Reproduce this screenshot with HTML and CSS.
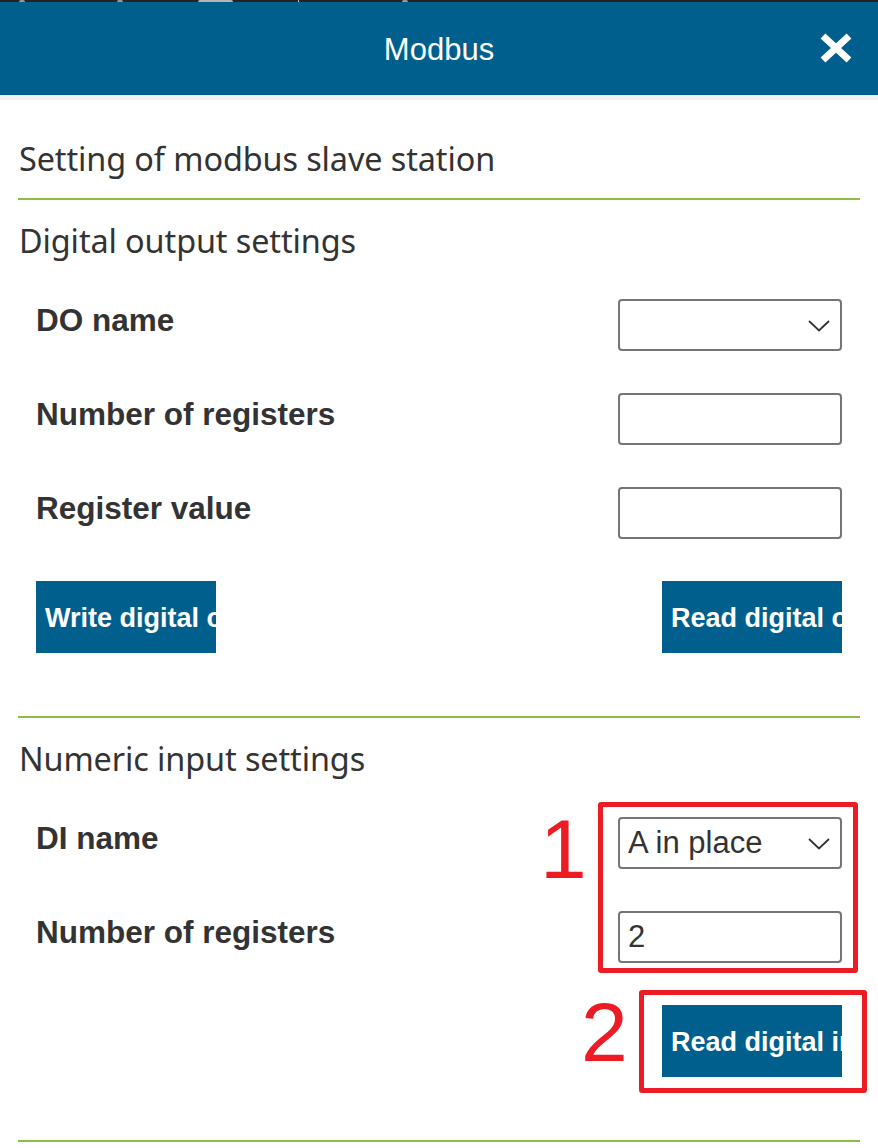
FILE: index.html
```html
<!DOCTYPE html>
<html lang="en">
<head>
<meta charset="utf-8">
<title>Modbus</title>
<link rel="stylesheet" href="styles.css">
</head>
<body>
<div class="topstrip">
  <span class="bump b1"></span>
  <span class="bump b2"></span>
  <span class="bump b3"></span>
  <span class="bump b4"></span>
  <span class="bump b5"></span>
</div>
<header class="header">
  <h1 class="header-title">Modbus</h1>
  <button class="close" aria-label="Close">
    <svg width="34" height="30" viewBox="0 0 34 30"><path d="M4 3 L30 27 M30 3 L4 27" stroke="#fff" stroke-width="7" fill="none"/></svg>
  </button>
</header>
<div class="band"></div>
<main class="content">
  <h2 class="heading first">Setting of modbus slave station</h2>
  <div class="rule"></div>

  <section class="section">
    <h2 class="heading">Digital output settings</h2>
    <div class="rows">
      <div class="row">
        <label class="label">DO name</label>
        <div class="field select"><span class="value"></span>
          <svg class="chev" width="22" height="12" viewBox="0 0 22 12"><path d="M1 1 L11 10.5 L21 1" stroke="#333" stroke-width="1.8" fill="none"/></svg>
        </div>
      </div>
      <div class="row">
        <label class="label">Number of registers</label>
        <div class="field"></div>
      </div>
      <div class="row">
        <label class="label">Register value</label>
        <div class="field"></div>
      </div>
    </div>
    <div class="buttons">
      <button class="btn">Write digital output</button>
      <button class="btn">Read digital output</button>
    </div>
  </section>
  <div class="rule"></div>

  <section class="section">
    <h2 class="heading">Numeric input settings</h2>
    <div class="rows annotated">
      <div class="row">
        <label class="label">DI name</label>
        <div class="field select"><span class="value">A in place</span>
          <svg class="chev" width="22" height="12" viewBox="0 0 22 12"><path d="M1 1 L11 10.5 L21 1" stroke="#333" stroke-width="1.8" fill="none"/></svg>
        </div>
      </div>
      <div class="row">
        <label class="label">Number of registers</label>
        <div class="field"><span class="value">2</span></div>
      </div>
      <div class="mark box1"></div>
      <div class="num n1">1</div>
    </div>
    <div class="buttons end annotated">
      <button class="btn">Read digital input</button>
      <div class="mark box2"></div>
      <div class="num n2">2</div>
    </div>
  </section>
  <div class="rule"></div>
</main>
</body>
</html>
```
FILE: styles.css
```css
* { box-sizing: border-box; }
html, body { margin: 0; padding: 0; background: #fff; }
body { width: 878px; height: 1148px; overflow: hidden; font-family: "Liberation Sans", Arial, sans-serif; }

.topstrip { height: 2px; background: #232323; display: flex; align-items: flex-end; }
.bump { display: block; height: 2px; background: #9a9a9a; border-radius: 2px 2px 0 0; }
.b1 { width: 6px; margin-left: 19px; }
.b2 { width: 6px; margin-left: 92px; }
.b3 { width: 35px; margin-left: 75px; background: #b5b5b5; }
.b4 { width: 1px; margin-left: 65px; background: #e0e0e0; }
.b5 { width: 6px; margin-left: 103px; }

.header {
  height: 93px; background: #005f8c; display: flex; align-items: center; justify-content: center;
  position: relative;
}
.header-title { margin: 0; color: #fff; font-weight: normal; font-size: 31px; font-family: "Liberation Sans", Arial, sans-serif; position: relative; top: 1px; }
.close { position: absolute; right: 25px; top: 31px; border: 0; background: none; padding: 0; width: 34px; height: 30px; }
.close svg { display: block; }

.band { height: 5px; background: #f0f0f0; }

.content { padding: 0 18px; }
.heading {
  margin: 0; padding-left: 1px; font-family: "Noto Sans", "Open Sans", sans-serif; font-weight: normal;
  font-size: 32.4px; line-height: 40px; color: #333; letter-spacing: -0.1px;
}
.heading.first { margin-top: 38px; margin-bottom: 20px; }
.rule { height: 2px; background: #8cbf3f; }
.section { padding-top: 20px; }

.rows { margin-top: 39px; display: flex; flex-direction: column; gap: 42px; padding: 0 18px; position: relative; }
.row { display: flex; justify-content: space-between; align-items: flex-start; height: 52px; }
.label { font-weight: bold; font-size: 31.5px; line-height: 42px; color: #333; }
.field {
  width: 224px; height: 52px; border: 2px solid #757575; border-radius: 4px; background: #fff;
  display: flex; align-items: center; justify-content: space-between; padding: 0 10px 0 8px;
}
.value { font-size: 31px; color: #333; }
.chev { display: block; margin-top: 2px; }

.buttons { margin-top: 42px; display: flex; justify-content: space-between; padding: 0 18px; margin-bottom: 63px; position: relative; }
.buttons.end { justify-content: flex-end; margin-top: 42px; }
.btn {
  width: 180px; height: 72px; background: #005f8c; color: #fff; border: 0; border-radius: 0;
  font-family: "Liberation Sans", Arial, sans-serif; font-weight: bold; font-size: 27px;
  text-align: left; padding: 2px 0 0 9px; white-space: nowrap; overflow: hidden;
}

.mark { position: absolute; border: 5px solid #ed1c24; border-radius: 3px; }
.box1 { left: 580px; top: -15px; width: 260px; height: 171px; }
.box2 { left: 621px; top: -15px; width: 228px; height: 103px; }
.num { position: absolute; color: #ed1c24; font-family: "Liberation Sans", Arial, sans-serif; font-size: 84px; line-height: 1; }
.n1 { left: 522px; top: -10px; }
.n2 { left: 563px; top: -15px; }
```
